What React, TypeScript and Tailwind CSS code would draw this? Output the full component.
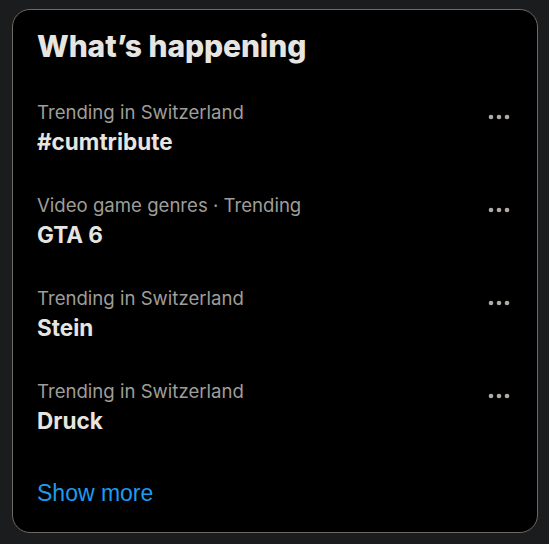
import React from "react";

const trends = [
  { meta: "Trending in Switzerland", name: "#cumtribute" },
  { meta: "Video game genres · Trending", name: "GTA 6" },
  { meta: "Trending in Switzerland", name: "Stein" },
  { meta: "Trending in Switzerland", name: "Druck" },
];

function Dots() {
  return (
    <svg width="24" height="24" viewBox="0 0 24 24" className="fill-[#b0aca4]">
      <circle cx="4" cy="12" r="2.3" />
      <circle cx="12" cy="12" r="2.3" />
      <circle cx="20" cy="12" r="2.3" />
    </svg>
  );
}

export default function App() {
  return (
    <div className="min-h-screen w-full bg-[#1b1c1e] pt-[9px] pl-[12px] font-['Inter',sans-serif]">
      <div className="w-[526px] h-[524px] rounded-[18px] border border-[#6f6a60] bg-black flex flex-col">
        {/* Header */}
        <h2 className="px-[24px] pt-[16px] text-[30px] leading-[40px] font-extrabold text-[#e7e5e1] tracking-[-0.1px]">
          What’s happening
        </h2>

        {/* Trends */}
        <div className="mt-[25px] flex flex-col">
          {trends.map((t, i) => (
            <div key={i} className="flex items-start justify-between pl-[24px] pr-[26px] h-[93px] pt-[8px]">
              <div className="flex flex-col">
                <span className="text-[18.6px] leading-[26px] text-[#9f9d98]">{t.meta}</span>
                <span className="text-[22.5px] leading-[34px] font-bold text-[#e7e5e1]">{t.name}</span>
              </div>
              <div className="pt-[6px]">
                <Dots />
              </div>
            </div>
          ))}
        </div>

        {/* Show more */}
        <div className="px-[24px] pt-[15px]">
          <span className="text-[23px] leading-[30px] text-[#1d9bf0] font-['Liberation_Sans',sans-serif]">
            Show more
          </span>
        </div>
      </div>
    </div>
  );
}
